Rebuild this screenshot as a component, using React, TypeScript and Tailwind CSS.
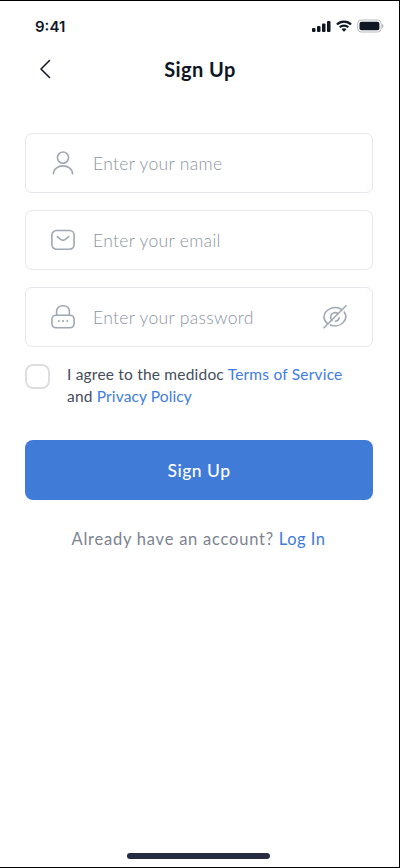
import type { ReactNode } from "react";

const stroke = {
  fill: "none",
  stroke: "#a0a8b3",
  strokeWidth: 1.6,
  strokeLinecap: "round" as const,
  strokeLinejoin: "round" as const,
};

function UserIcon() {
  return (
    <svg width="26" height="26" viewBox="0 0 26 26" {...stroke}>
      <circle cx="13" cy="7.6" r="5.6" />
      <path d="M3.4 23.8C4.2 13.2 21.8 13.2 22.6 23.8" />
    </svg>
  );
}

function MailIcon() {
  return (
    <svg width="26" height="26" viewBox="0 0 26 26" {...stroke}>
      <rect x="1.9" y="3.5" width="22.2" height="18.7" rx="4.6" />
      <path d="M7.3 9.6l3.4 2.8c1.4 1.1 3.2 1.1 4.6 0l3.4-2.8" />
    </svg>
  );
}

function LockIcon() {
  return (
    <svg width="26" height="26" viewBox="0 0 26 26" {...stroke}>
      <rect x="1.9" y="11.2" width="22.2" height="12.6" rx="4.2" />
      <path d="M6.6 11V7.6c0-3.4 2.2-5.8 6.4-5.8s6.4 2.4 6.4 5.8V11" />
      <path d="M8.8 17.1h.1M13 17.1h.1M17.2 17.1h.1" strokeWidth="2" />
    </svg>
  );
}

function EyeOffIcon() {
  return (
    <svg width="26" height="26" viewBox="0 0 26 26" {...stroke}>
      <path d="M24 1.8L2 23.8" />
      <path d="M20.2 5.8C16.4 3.1 11.8 3 7.8 4.9C4 6.8 2 10.2 2 13.1c0 2.5 1.3 4.8 3.6 6.6" />
      <path d="M22.2 8c2.5 3.6 2 7.2-.8 10.2c-3.3 3.6-8.7 4.5-13.1 2.7" />
      <path d="M16 9.6C12.9 7.3 8.6 9.5 8.6 13.1c0 1.4.5 2.6 1.4 3.3" />
      <path d="M17.2 13.8c-.4 1.8-1.7 3-3.5 3.3" />
    </svg>
  );
}

function Field({ icon, label, trailing }: { icon: ReactNode; label: string; trailing?: ReactNode }) {
  return (
    <div className="flex h-[60px] items-center rounded-[7px] border border-[#e5e7eb] px-6">
      {icon}
      <span className="ml-[17px] flex-1 whitespace-nowrap pt-0.5 text-[17.5px] font-light leading-6 tracking-[0.33px] text-[#8b949f]">
        {label}
      </span>
      {trailing}
    </div>
  );
}

function StatusBar() {
  return (
    <div className="flex h-[50px] items-center justify-between pl-[35px] pr-[15px]">
      <span className="pt-0.5 font-['Inter',sans-serif] text-[15px] font-semibold leading-5">9:41</span>
      <div className="flex h-[14px] items-center">
        <svg width="20" height="14" viewBox="0 0 20 14" fill="#101623">
          <rect x="0" y="9" width="3.5" height="4" rx="1" />
          <rect x="5" y="7" width="3.5" height="6" rx="1" />
          <rect x="10" y="4.5" width="3.5" height="8.5" rx="1" />
          <rect x="15" y="2" width="3.5" height="11" rx="1" />
        </svg>
        <svg className="ml-1" width="16" height="14" viewBox="0 0 17 14" fill="none" stroke="#101623" strokeWidth="2.3">
          <path d="M1 5.5C5.2 1.4 11.8 1.4 16 5.5" />
          <path d="M3.9 8.4C6.5 5.9 10.5 5.9 13.1 8.4" />
          <path d="M8.5 13L5.9 10.4C7.4 9 9.6 9 11.1 10.4Z" fill="#101623" stroke="none" />
        </svg>
        <svg className="ml-[5px]" width="27" height="14" viewBox="0 0 27 14">
          <rect x="0.7" y="1" width="23.5" height="12" rx="3.5" fill="none" stroke="#b8bac0" />
          <rect x="2.5" y="2.8" width="19.9" height="8.4" rx="2" fill="#101623" />
          <path d="M25.2 5v4q1.2-.7 1.2-2t-1.2-2z" fill="#a4a6ad" />
        </svg>
      </div>
    </div>
  );
}

export default function App() {
  return (
    <main className="flex h-[868px] w-[400px] flex-col border-b border-r border-t border-black bg-white font-['Lato','Open_Sans',sans-serif] text-[#101623]">
      <StatusBar />
      <header className="grid h-[36px] grid-cols-[64px_1fr_64px] items-center">
        <button aria-label="Back" className="pl-[39px]">
          <svg width="12" height="20" viewBox="0 0 12 20" fill="none" stroke="#101623" strokeWidth="1.5" strokeLinecap="round" strokeLinejoin="round">
            <path d="M10.5 1.5L2 10l8.5 8.5" />
          </svg>
        </button>
        <h1 className="pl-px text-center text-[20px] font-bold leading-6 tracking-[0.45px]">Sign Up</h1>
      </header>

      <form className="ml-[25px] mt-[46px] flex w-[348px] flex-col gap-[17px] self-start">
        <Field icon={<UserIcon />} label="Enter your name" />
        <Field icon={<MailIcon />} label="Enter your email" />
        <Field icon={<LockIcon />} label="Enter your password" trailing={<EyeOffIcon />} />
        <div className="flex items-start">
          <span className="h-[25px] w-[25px] shrink-0 rounded-[8px] border-2 border-[#dcdee2]" />
          <p className="-mt-px ml-[17px] whitespace-nowrap text-[15.5px] leading-[22px] text-[#444c5a]">
            <span className="tracking-[0.2px]">I agree to the medidoc </span>
            <a className="tracking-[0.2px] text-[#407ce2]">Terms of Service</a>
            <br />
            <span className="tracking-[0.2px]">and </span>
            <a className="tracking-[0.12px] text-[#407ce2]">Privacy Policy</a>
          </p>
        </div>
        <button type="button" className="mt-4 h-[60px] rounded-[8px] bg-[#407bd8] pt-0.5 text-[17.5px] font-medium tracking-[0.5px] text-white">
          Sign Up
        </button>
      </form>

      <p className="mt-[27px] whitespace-nowrap pl-[71.5px] text-[16.5px] leading-6 text-[#7d838f]">
        <span className="tracking-[0.77px]">Already have an account? </span>
        <a className="tracking-[0.5px] text-[#407bd8]">Log In</a>
      </p>

      <div className="mb-[8px] ml-[127px] mt-auto h-[6px] w-[143px] rounded-full bg-[#262b42]" />
    </main>
  );
}
